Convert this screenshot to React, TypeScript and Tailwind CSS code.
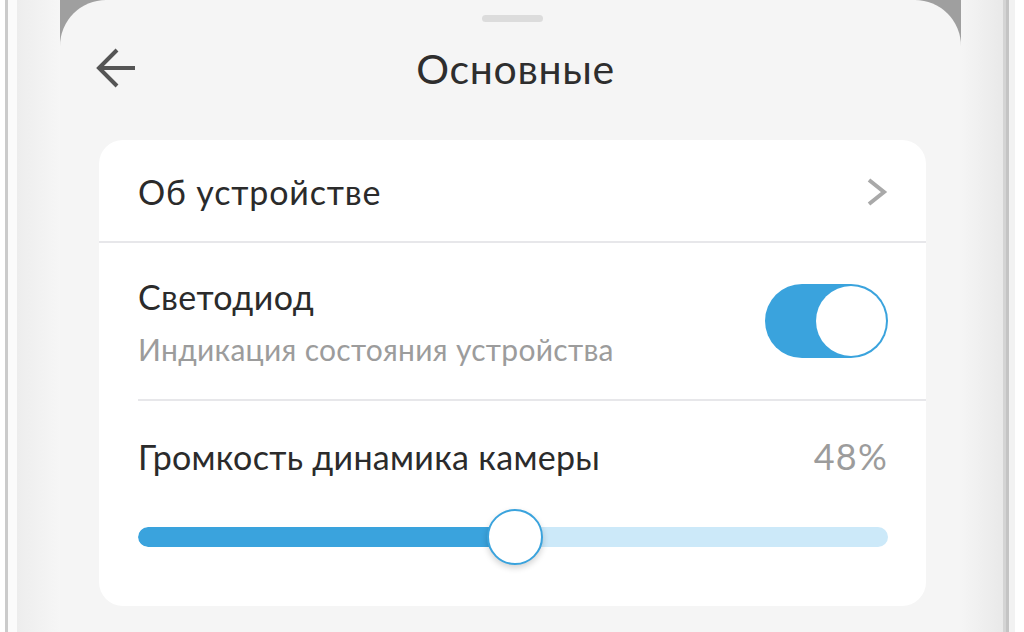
const BLUE = "#3aa3dd";

function BackArrow() {
  return (
    <svg width="42" height="42" viewBox="0 0 42 42" fill="none">
      <path
        d="M39 21H4M21 3L3 21l18 18"
        stroke="#555"
        strokeWidth="4"
        strokeLinecap="butt"
        strokeLinejoin="miter"
      />
    </svg>
  );
}

function Chevron() {
  return (
    <svg width="22" height="30" viewBox="0 0 22 30" fill="none">
      <path d="M3 3l15 12L3 27" stroke="#a9a9a9" strokeWidth="4" />
    </svg>
  );
}

function Toggle({ on }: { on: boolean }) {
  return (
    <div
      className={`flex h-[74px] w-[123px] items-center rounded-full p-[2px] ${
        on ? "justify-end bg-[#3aa3dd]" : "justify-start bg-[#e0e0e0]"
      }`}
    >
      <div className="h-[70px] w-[70px] rounded-full bg-white" />
    </div>
  );
}

function Slider({ value }: { value: number }) {
  const pct = value;
  return (
    <div className="relative flex h-[56px] items-center">
      <div className="h-[20px] w-full overflow-hidden rounded-full bg-[#cce9f9]">
        <div className="h-full rounded-full" style={{ width: `${pct}%`, background: BLUE }} />
      </div>
      <div
        className="absolute top-0 h-[56px] w-[56px] -translate-x-1/2 rounded-full border-2 border-[#3aa3dd] bg-white shadow-[0_3px_6px_rgba(0,0,0,0.18)]"
        style={{ left: `${pct}%` }}
      />
    </div>
  );
}

export default function App() {
  return (
    <div
      className="flex h-[632px] w-[1024px] overflow-hidden bg-white"
      style={{ fontFamily: "Lato, 'Noto Sans', sans-serif" }}
    >
      {/* left bezel */}
      <div className="flex h-full w-[60px]">
        <div className="w-[5px] bg-white" />
        <div className="w-[3px] bg-[#cbcbcb]" />
        <div className="w-[9px] bg-[#fbfbfb]" />
        <div className="flex-1 bg-gradient-to-r from-[#ededed] to-[#f6f6f6]" />
      </div>

      {/* screen */}
      <div className="h-full w-[901px] bg-[#9f9f9f]">
        <div className="flex h-full flex-col rounded-t-[46px] bg-[#f5f5f5] pl-[39px] pr-[35px]">
          <div className="mx-auto mt-[15px] h-[7px] w-[61px] rounded-full bg-[#dcdcdc]" />

          <div className="relative mt-[8px] flex h-[76px] items-center justify-center">
            <button className="absolute left-[-3px] top-[17px]">
              <BackArrow />
            </button>
            <h1 className="ml-[6px] text-[41px] leading-none tracking-[0.7px] text-[#2e2e2e]">
              Основные
            </h1>
          </div>

          <div className="mt-[34px] flex flex-col rounded-[24px] bg-white">
            <div className="flex h-[103px] items-center justify-between border-b-2 border-[#e7e7ea] pl-[39px] pr-[38px] pt-[2px]">
              <span className="text-[34px] tracking-[0.85px] text-[#2b2b2b]">Об устройстве</span>
              <Chevron />
            </div>

            <div className="ml-[39px] flex h-[158px] items-center justify-between border-b-2 border-[#e7e7ea] pr-[38px]">
              <div className="flex flex-col pt-[2px]">
                <span className="text-[34px] leading-[40px] tracking-[0.4px] text-[#2b2b2b]">
                  Светодиод
                </span>
                <span className="mt-[14px] text-[30px] leading-[36px] tracking-[0.3px] text-[#9c9c9c]">
                  Индикация состояния устройства
                </span>
              </div>
              <Toggle on />
            </div>

            <div className="flex flex-col pb-[41px] pl-[39px] pr-[38px] pt-[35px]">
              <div className="flex h-[40px] items-center justify-between">
                <span className="text-[34px] tracking-[0.3px] text-[#2b2b2b]">
                  Громкость динамика камеры
                </span>
                <span className="text-[36px] tracking-[1.2px] text-[#9c9c9c]">48%</span>
              </div>
              <div className="mt-[33px]">
                <Slider value={50.2} />
              </div>
            </div>
          </div>
        </div>
      </div>

      {/* right bezel */}
      <div className="flex h-full flex-1">
        <div className="w-[42px] bg-gradient-to-r from-[#f5f5f5] to-[#e9e9e9]" />
        <div className="w-[3px] bg-[#d4d4d4]" />
        <div className="w-[3px] bg-[#c4c4c4]" />
        <div className="w-[6px] bg-[#f2f2f2]" />
        <div className="flex-1 bg-white" />
      </div>
    </div>
  );
}
